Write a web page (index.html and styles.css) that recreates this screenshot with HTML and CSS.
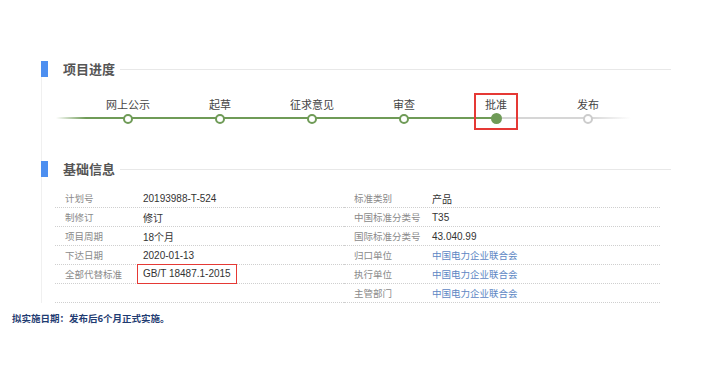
FILE: index.html
```html
<!DOCTYPE html>
<html lang="zh-CN">
<head>
<meta charset="UTF-8" />
<title>项目进度</title>
<link rel="stylesheet" href="styles.css">
</head>
<body>

<div class="wrap">
    <div class="section-head"><h2>项目进度</h2></div>
    <div class="timeline">
        <div class="step done"><div class="step-in"><span>网上公示</span><i></i></div></div>
        <div class="step done"><div class="step-in"><span>起草</span><i></i></div></div>
        <div class="step done"><div class="step-in"><span>征求意见</span><i></i></div></div>
        <div class="step done"><div class="step-in"><span>审查</span><i></i></div></div>
        <div class="step current"><div class="step-in"><span>批准</span><i></i></div></div>
        <div class="step"><div class="step-in"><span>发布</span><i></i></div></div>
    </div>

    <div class="section-head second"><h2>基础信息</h2></div>
    <div class="info">
        <div class="info-col left">
            <div class="row"><span class="k">计划号</span><span class="v">20193988-T-524</span></div>
            <div class="row"><span class="k">制修订</span><span class="v">修订</span></div>
            <div class="row"><span class="k">项目周期</span><span class="v">18个月</span></div>
            <div class="row"><span class="k">下达日期</span><span class="v">2020-01-13</span></div>
            <div class="row"><span class="k">全部代替标准</span><span class="v"><span class="boxed">GB/T 18487.1-2015</span></span></div>
            <div class="row"><span class="k"></span><span class="v"></span></div>
        </div>
        <div class="info-col right">
            <div class="row"><span class="k">标准类别</span><span class="v">产品</span></div>
            <div class="row"><span class="k">中国标准分类号</span><span class="v">T35</span></div>
            <div class="row"><span class="k">国际标准分类号</span><span class="v">43.040.99</span></div>
            <div class="row"><span class="k">归口单位</span><span class="v link">中国电力企业联合会</span></div>
            <div class="row"><span class="k">执行单位</span><span class="v link">中国电力企业联合会</span></div>
            <div class="row"><span class="k">主管部门</span><span class="v link">中国电力企业联合会</span></div>
        </div>
    </div>
</div>

<p class="note">拟实施日期：发布后6个月正式实施。</p>

</body>
</html>
```

FILE: styles.css
```css
body {
    margin: 0;
    padding-top: 61px;
    font-family: "Noto Sans CJK SC", sans-serif;
    background: #fff;
    color: #333;
}
.wrap {
    margin-left: 41px;
    width: 629px;
    border-left: 1px solid #f0f0f0;
}
.section-head {
    display: flex;
    align-items: center;
    height: 16px;
    margin-left: -1px;
}
.section-head::before {
    content: "";
    width: 7px;
    height: 16px;
    background: #4d8ff0;
}
.section-head::after {
    content: "";
    flex: 1;
    height: 1px;
    margin-left: 5px;
    background: #e8e8e8;
}
.section-head h2 {
    margin: 0 0 0 15px;
    font-size: 13px;
    font-weight: bold;
    color: #555;
    line-height: 16px;
}
.section-head.second {
    margin-top: 31px;
}
.timeline {
    display: flex;
    padding: 16px 0 0 40px;
    background: linear-gradient(to right, rgba(111,155,87,0) 0, #6f9b57 30px, #6f9b57 76.9%, #d6d6d6 76.9%, #d6d6d6 93%, rgba(214,214,214,0) 100%) no-repeat;
    background-position: 14px 40px;
    background-size: 575px 2px;
}
.step {
    width: 92px;
}
.step-in {
    display: flex;
    flex-direction: column;
    align-items: center;
    width: max-content;
    margin: 0 auto;
    padding: 2px 9px 4px;
    border: 2px solid transparent;
}
.step-in span {
    font-size: 11px;
    line-height: 14px;
    color: #444;
    white-space: nowrap;
}
.step-in i {
    display: block;
    width: 6px;
    height: 6px;
    margin-top: 3px;
    border: 2px solid #ccc;
    border-radius: 50%;
    background: #fff;
}
.step.done .step-in i {
    border-color: #6f9b57;
}
.step.current .step-in {
    border-color: #e53935;
}
.step.current .step-in i {
    width: 11px;
    height: 11px;
    margin-top: 2px;
    border: 0;
    background: #6f9b57;
}
.info {
    display: flex;
    margin: 12px 0 0 13px;
}
.info-col.left {
    width: 289px;
}
.info-col.right {
    width: 316px;
}
.row {
    display: flex;
    align-items: center;
    height: 18px;
    border-bottom: 1px dotted #cfcfcf;
    font-size: 9.5px;
}
.k {
    width: 88px;
    padding-left: 10px;
    box-sizing: border-box;
    color: #8a8a8a;
    white-space: nowrap;
}
.v {
    color: #333;
    font-family: "Liberation Sans", "Noto Sans CJK SC", sans-serif;
    font-size: 10px;
}
.v.link {
    color: #5d87c4;
    font-family: "Noto Sans CJK SC", sans-serif;
    font-size: 9.5px;
}
.boxed {
    display: inline-block;
    margin: -2px 0 -2px -6px;
    padding: 2px 5px;
    line-height: 14px;
    border: 1.5px solid #e53935;
}
.note {
    margin: 8px 0 0 12px;
    font-size: 9.5px;
    line-height: 14px;
    font-weight: bold;
    color: #1f3c72;
}
```
